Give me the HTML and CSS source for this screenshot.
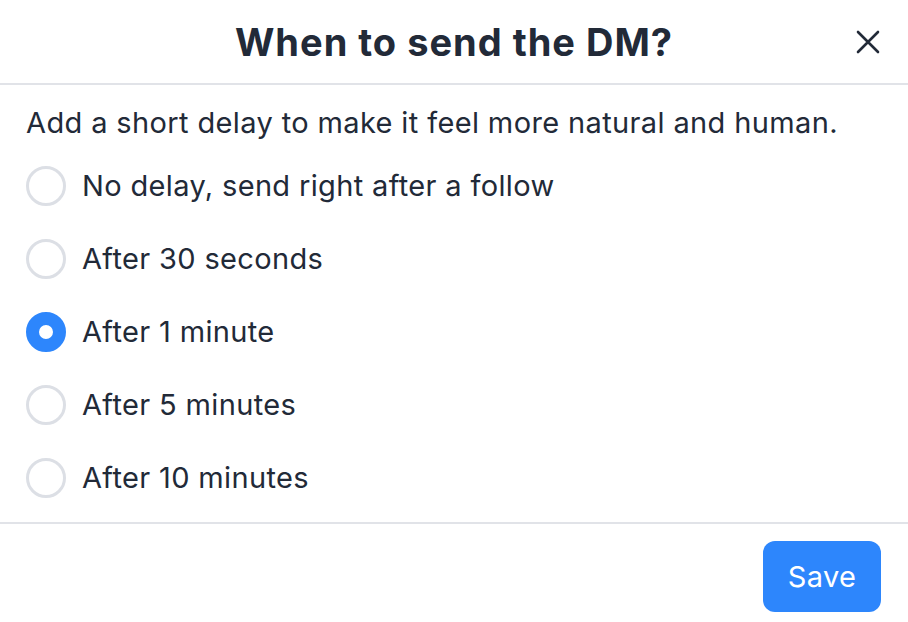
FILE: index.html
```html
<!DOCTYPE html>
<html>
<head>
<meta charset="utf-8">
<link rel="stylesheet" href="styles.css">
</head>
<body>
<div class="modal">
  <header class="modal-header">
    <h1 class="title">When to send the DM?</h1>
    <button class="close" aria-label="Close">
      <svg width="26" height="26" viewBox="0 0 26 26"><path d="M3 3 L23 23 M23 3 L3 23" stroke="#222a38" stroke-width="2.6" stroke-linecap="round" fill="none"/></svg>
    </button>
  </header>
  <div class="modal-body">
    <p class="desc">Add a short delay to make it feel more natural and human.</p>
    <div class="options">
      <label class="option"><span class="radio"></span><span class="label">No delay, send right after a follow</span></label>
      <label class="option"><span class="radio"></span><span class="label">After 30 seconds</span></label>
      <label class="option"><span class="radio checked"></span><span class="label">After 1 minute</span></label>
      <label class="option"><span class="radio"></span><span class="label">After 5 minutes</span></label>
      <label class="option"><span class="radio"></span><span class="label">After 10 minutes</span></label>
    </div>
  </div>
  <footer class="modal-footer">
    <button class="save">Save</button>
  </footer>
</div>
</body>
</html>
```
FILE: styles.css
```css
* { box-sizing: border-box; }
html, body { margin: 0; padding: 0; background: #fff; }
body { font-family: Inter, "Noto Sans", sans-serif; color: #222a38; }
.modal { width: 908px; height: 622px; display: flex; flex-direction: column; }
.modal-header {
  height: 85px;
  border-bottom: 2px solid #e1e3e8;
  display: flex; align-items: center; justify-content: center;
  position: relative;
}
.title { margin: 0; font-size: 38px; font-weight: 700; letter-spacing: 1px; }
.close {
  position: absolute; right: 27px; top: 29px;
  width: 26px; height: 26px; padding: 0; border: 0; background: none;
  display: flex; align-items: center; justify-content: center;
}
.modal-body { padding: 20px 26px 8px; }
.desc { margin: 0; font-size: 29px; line-height: 36px; letter-spacing: 0.37px; }
.options { display: flex; flex-direction: column; margin-top: 8px; }
.option { height: 73px; display: flex; align-items: center; gap: 16px; }
.radio {
  width: 40px; height: 40px; border-radius: 50%;
  border: 3.5px solid #dcdfe5; background: #fff; flex: none;
}
.radio.checked { border: 13px solid #2d86fc; background: #fff; }
.label { font-size: 29px; letter-spacing: 0.35px; }
.modal-footer {
  border-top: 2px solid #e1e3e8;
  display: flex; justify-content: flex-end;
  padding: 17px 27px 0;
}
.save {
  width: 118px; height: 71px; border: 0; border-radius: 12px;
  background: #2d86fc; color: #fff; font-family: Inter, sans-serif; font-size: 29px; letter-spacing: 0.3px;
}
```
